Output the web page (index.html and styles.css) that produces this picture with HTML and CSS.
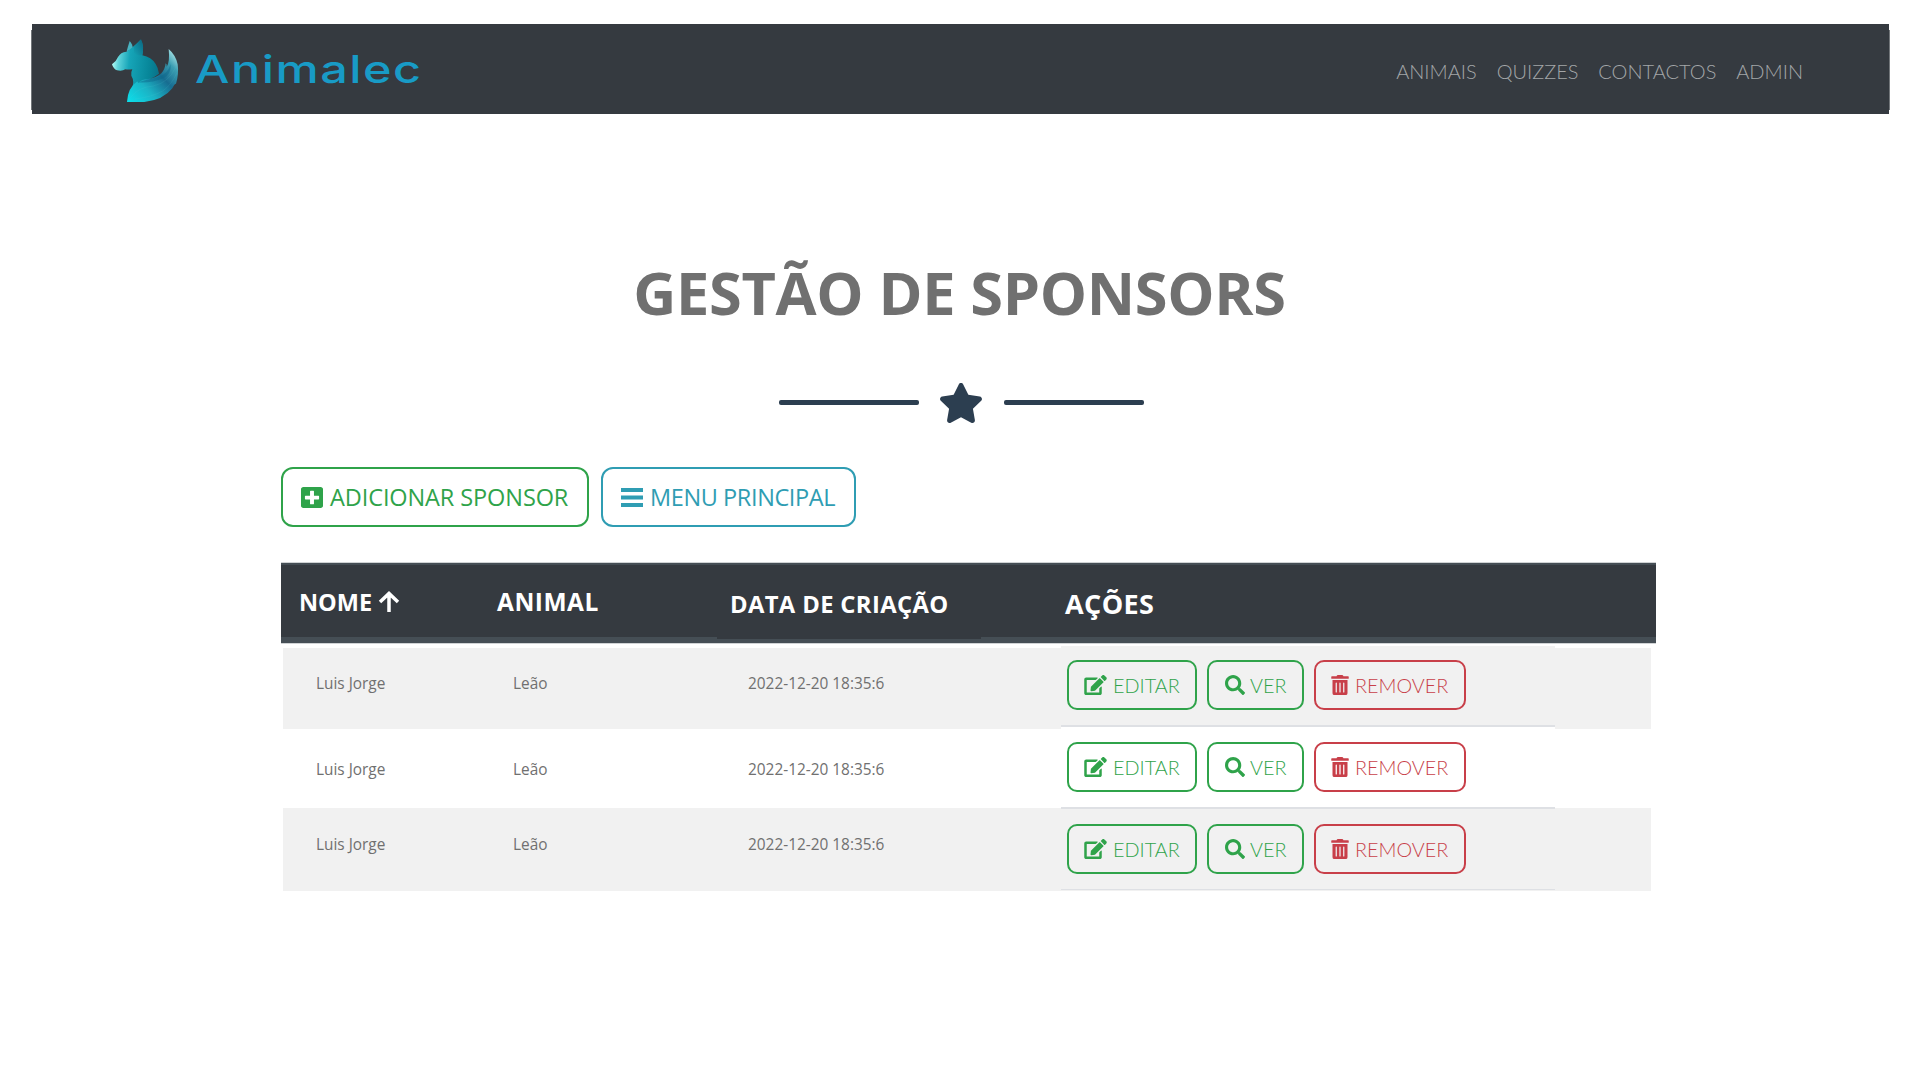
FILE: index.html
```html
<!DOCTYPE html>
<html lang="pt">
<head>
<meta charset="utf-8">
<title>Animalec - Gestão de Sponsors</title>
<link rel="stylesheet" href="styles.css">
</head>
<body>
<svg class="sprite" aria-hidden="true">
  <symbol id="edit" viewBox="0 0 576 512"><path d="M402.6 83.2l90.2 90.2c3.8 3.8 3.8 10 0 13.8L274.4 405.600l-92.800 10.300c-12.400 1.400-22.900-9.100-21.500-21.500l10.300-92.800L388.800 83.200c3.800-3.800 10-3.800 13.800 0zm162-22.900l-48.800-48.800c-15.200-15.200-39.900-15.200-55.200 0l-35.400 35.400c-3.800 3.800-3.800 10 0 13.800l90.200 90.200c3.800 3.800 10 3.800 13.800 0l35.400-35.400c15.200-15.300 15.200-40 0-55.200zM384 346.200V448H64V128h229.800c3.200 0 6.200-1.300 8.500-3.500l40-40c7.600-7.600 2.200-20.500-8.500-20.500H48C21.500 64 0 85.500 0 112v352c0 26.500 21.500 48 48 48h352c26.500 0 48-21.500 48-48V306.200c0-10.700-12.900-16-20.500-8.500l-40 40c-2.200 2.300-3.500 5.300-3.500 8.500z"/></symbol>
  <symbol id="search" viewBox="0 0 512 512"><path d="M505 442.700L405.300 343c-4.500-4.500-10.600-7-17-7H372c27.600-35.300 44-79.700 44-128C416 93.100 322.900 0 208 0S0 93.100 0 208s93.100 208 208 208c48.300 0 92.700-16.400 128-44v16.300c0 6.400 2.500 12.500 7 17l99.700 99.700c9.400 9.400 24.600 9.400 33.900 0l28.300-28.300c9.400-9.400 9.400-24.600.1-34zM208 336c-70.700 0-128-57.200-128-128 0-70.700 57.200-128 128-128 70.700 0 128 57.200 128 128 0 70.700-57.200 128-128 128z"/></symbol>
  <symbol id="trash" viewBox="0 0 448 512"><path d="M32 464a48 48 0 0 0 48 48h288a48 48 0 0 0 48-48V128H32zm272-256a16 16 0 0 1 32 0v224a16 16 0 0 1-32 0zm-96 0a16 16 0 0 1 32 0v224a16 16 0 0 1-32 0zm-96 0a16 16 0 0 1 32 0v224a16 16 0 0 1-32 0zM432 32H312l-9.400-18.700A24 24 0 0 0 281.100 0H166.800a23.700 23.700 0 0 0-21.400 13.300L136 32H16A16 16 0 0 0 0 48v32a16 16 0 0 0 16 16h416a16 16 0 0 0 16-16V48a16 16 0 0 0-16-16z"/></symbol>
</svg>

<header class="navbar">
  <a class="brand">
    <svg class="fox" viewBox="30 21 210 198">
      <defs>
        <linearGradient id="head" x1="0" y1=".5" x2="1" y2=".6"><stop offset="0" stop-color="#b5fbf5"/><stop offset=".13" stop-color="#5fd3da"/><stop offset=".36" stop-color="#16a5b8"/><stop offset=".8" stop-color="#078699"/><stop offset="1" stop-color="#0a7289"/></linearGradient>
        <linearGradient id="ear" x1="0" y1="1" x2="1" y2="0"><stop offset="0" stop-color="#14a3b5"/><stop offset="1" stop-color="#0a6580"/></linearGradient>
        <linearGradient id="tail" x1="0" y1="1" x2="1" y2="0"><stop offset="0" stop-color="#0be0ec"/><stop offset=".32" stop-color="#1bb2c4"/><stop offset=".58" stop-color="#176d91"/><stop offset=".78" stop-color="#3c9eb2"/><stop offset="1" stop-color="#d5fffb"/></linearGradient>
      </defs>
      <path fill="#49b2c0" d="M80 64Q84 48 89 33Q98 42 99 58Z"/>
      <path fill="url(#head)" d="M36 103Q49 94 54 81Q62 66 79 65Q91 58 101 49Q112 39 122 29Q133 48 127 76Q154 81 167 102Q175 114 177 131Q163 142 146 149Q118 158 96 174Q104 153 94 137Q92 127 97 118Q85 119 76 118Q66 125 51 121Q40 117 36 103Z"/>
      <path fill="url(#ear)" d="M101 50Q113 40 123 28Q133 48 127 75Q113 79 102 69Z"/>
      <path fill="url(#tail)" d="M81 216Q83 174 112 154Q112 157 115 158Q125 148 145 147Q168 144 184 130Q195 118 197 100Q201 102 200 110Q210 96 206 57Q227 75 233 103Q237 132 228 161Q223 161 217 175Q190 210 133 216Z"/>
      <path fill="#0c6689" opacity=".45" d="M113 157Q144 148 178 140Q202 132 212 103Q214 132 191 145Q153 160 113 157Z"/>
      <path fill="none" stroke="#5bc7d0" opacity=".2" stroke-width="2" d="M92 202Q115 171 160 168Q206 158 227 112M105 207Q156 201 188 183Q214 165 230 130"/>
    </svg>
    <span class="brand-name">Animalec</span>
  </a>
  <nav class="links">
    <a>ANIMAIS</a><a>QUIZZES</a><a>CONTACTOS</a><a>ADMIN</a>
  </nav>
</header>

<main>
  <h1 class="title">GESTÃO DE SPONSORS</h1>
  <div class="divider">
    <span class="line"></span>
    <svg class="star" viewBox="20 0 536 512" preserveAspectRatio="none"><path d="M259.300 17.800L194 150.200 47.900 171.500c-26.200 3.800-36.700 36.100-17.700 54.600l105.700 103-25 145.500c-4.500 26.300 23.200 46 46.400 33.700L288 439.600l130.700 68.700c23.200 12.200 50.900-7.400 46.400-33.700l-25-145.500 105.700-103c19-18.500 8.500-50.800-17.700-54.600L382 150.200 316.700 17.800c-11.700-23.600-45.600-23.900-57.400 0z"/></svg>
    <span class="line"></span>
  </div>

  <div class="toolbar">
    <a class="tool add">
      <svg class="icon" viewBox="0 32 448 448" preserveAspectRatio="none"><path d="M400 32H48C21.500 32 0 53.500 0 80v352c0 26.500 21.500 48 48 48h352c26.500 0 48-21.500 48-48V80c0-26.500-21.500-48-48-48zm-32 252c0 6.600-5.400 12-12 12h-92v92c0 6.600-5.400 12-12 12h-56c-6.600 0-12-5.400-12-12v-92H92c-6.600 0-12-5.400-12-12v-56c0-6.600 5.400-12 12-12h92v-92c0-6.600 5.400-12 12-12h56c6.600 0 12 5.400 12 12v92h92c6.600 0 12 5.400 12 12v56z"/></svg>
      <span>ADICIONAR SPONSOR</span>
    </a>
    <a class="tool menu">
      <svg class="icon" viewBox="0 0 22 21"><path d="M0 1h22v4H0zM0 8.500h22v4H0zM0 16h22v4H0z"/></svg>
      <span>MENU PRINCIPAL</span>
    </a>
  </div>

  <section class="table">
    <div class="thead">
      <div class="th name"><span>NOME</span><svg class="arrow" viewBox="0 0 22 22"><path d="M2 11L11 2.500L20 11M11 3V21"/></svg></div>
      <div class="th animal"><span>ANIMAL</span></div>
      <div class="th date"><span>DATA DE CRIAÇÃO</span></div>
      <div class="th actions-head"><span>AÇÕES</span></div>
    </div>
    <div class="row first">
      <div class="td name">Luis Jorge</div><div class="td animal">Leão</div><div class="td date">2022-12-20 18:35:6</div>
      <div class="actions">
        <a class="btn edit"><svg><use href="#edit"/></svg><span>EDITAR</span></a>
        <a class="btn view"><svg><use href="#search"/></svg><span>VER</span></a>
        <a class="btn remove"><svg><use href="#trash"/></svg><span>REMOVER</span></a>
      </div>
    </div>
    <div class="row second">
      <div class="td name">Luis Jorge</div><div class="td animal">Leão</div><div class="td date">2022-12-20 18:35:6</div>
      <div class="actions">
        <a class="btn edit"><svg><use href="#edit"/></svg><span>EDITAR</span></a>
        <a class="btn view"><svg><use href="#search"/></svg><span>VER</span></a>
        <a class="btn remove"><svg><use href="#trash"/></svg><span>REMOVER</span></a>
      </div>
    </div>
    <div class="row third">
      <div class="td name">Luis Jorge</div><div class="td animal">Leão</div><div class="td date">2022-12-20 18:35:6</div>
      <div class="actions">
        <a class="btn edit"><svg><use href="#edit"/></svg><span>EDITAR</span></a>
        <a class="btn view"><svg><use href="#search"/></svg><span>VER</span></a>
        <a class="btn remove"><svg><use href="#trash"/></svg><span>REMOVER</span></a>
      </div>
    </div>
  </section>
</main>
</body>
</html>
```
FILE: styles.css
```css
* { box-sizing: border-box; }
body { margin: 0; background: #fff; font-family: "Open Sans", "Noto Sans", sans-serif; white-space: nowrap; overflow: hidden; }
.sprite { display: none; }
svg { display: block; flex: none; }

.navbar { position: relative; display: flex; justify-content: space-between; width: 1857px; height: 90px; margin: 24px 0 0 32px; padding: 0 86px 0 78px; background: #353a40; }
.navbar::before, .navbar::after { content: ""; position: absolute; top: 6px; bottom: 4px; width: 1px; background: #72767a; }
.navbar::before { left: -1px; }
.navbar::after { right: -1px; }
.brand { display: flex; }
.fox { width: 70px; height: 66px; margin-top: 13px; }
.brand-name { margin-left: 15px; padding-top: 18px; font: 500 38.5px/54px Inter, sans-serif; letter-spacing: 1.2px; transform: scaleX(1.262); transform-origin: left; color: #189bc6; }
.links { display: flex; gap: 19.900px; padding-top: 27px; font: 300 20px/40px Lato, sans-serif; color: #a3a6a8; }

.title { margin: 138px 0 0; padding-right: 1px; text-align: center; font-size: 59.5px; line-height: 80px; font-weight: 700; letter-spacing: -.33px; color: #707070; }
.divider { display: flex; justify-content: center; align-items: center; gap: 21px; height: 40px; margin: 51px 0 0 3px; }
.line { width: 140px; height: 5px; margin-top: -1px; border-radius: 2px; background: #2c3e50; }
.star { width: 42px; height: 40px; margin-right: 1px; fill: #2c3e50; }

.toolbar { display: flex; gap: 12px; margin: 44px 0 0 281px; }
.tool { display: flex; align-items: center; height: 60px; padding-left: 18px; border: 2px solid; border-radius: 12px; font-size: 23.500px; line-height: 40px; }
.tool .icon { width: 22px; height: 21px; margin-right: 7px; fill: currentColor; }
.add { width: 308px; letter-spacing: -.1px; color: #2fa34a; }
.menu { width: 255px; letter-spacing: -.4px; color: #2f9db3; }

.table { width: 1375px; margin: 36px 0 0 281px; }
.thead { display: flex; height: 80px; background: #353a40; border: solid #454e55; border-width: 2px 0 6px; box-shadow: 0 -1px #d0d3d5, 0 1px #d0d3d5; color: #fff; font-weight: 700; }
.th { display: flex; line-height: 40px; }
.th.name { width: 197px; padding: 17px 0 0 18px; font-size: 23.500px; }
.arrow { width: 22px; height: 22px; margin: 9px 0 0 6px; fill: none; stroke: #fff; stroke-width: 3.500; }
.th.animal { width: 239px; padding: 17px 0 0 19px; font-size: 24.500px; letter-spacing: .5px; }
.th.date { width: 264px; height: 74px; padding: 19px 0 0 13px; font-size: 23.800px; letter-spacing: .35px; background: #353a40; }
.actions-head { padding: 19px 0 0 84px; font-size: 27px; letter-spacing: .4px; }

.row { display: flex; width: 1368px; margin-left: 2px; background: #f1f1f1; }
.td { line-height: 20px; padding-top: 26px; font-size: 15.400px; color: #707070; }
.td.name { width: 230px; padding-left: 33px; }
.td.animal { width: 235px; }
.td.date { width: 313px; }
.first { height: 81px; margin-top: 5px; }
.second { height: 79px; background: #fff; }
.second .td { padding-top: 31px; }
.third { height: 83px; }
.third .td { padding-top: 27px; }
.actions { position: relative; display: flex; align-items: flex-start; width: 494px; height: 81px; margin-top: -2px; padding: 14px 0 0 6px; gap: 10px; background: inherit; border-bottom: 2px solid #dee0e4; }
.second .actions { height: 82px; padding-top: 15px; }
.third .actions { margin-top: 1px; padding-top: 15px; border-bottom-width: 1px; }
.btn { display: flex; align-items: center; height: 50px; padding-left: 15px; border: 2px solid; border-radius: 10px; font: 300 19.800px/40px Lato, sans-serif; }
.btn svg { height: 20px; fill: currentColor; }
.edit, .view { color: #2fa34a; }
.remove { color: #c83f49; }
.edit { width: 130px; }
.edit svg { width: 23px; margin-right: 6px; }
.view { width: 97px; padding-left: 16px; }
.view svg { width: 20px; margin-right: 5px; }
.remove { width: 152px; padding-left: 15px; }
.remove svg { width: 18px; margin-right: 6px; }
```
